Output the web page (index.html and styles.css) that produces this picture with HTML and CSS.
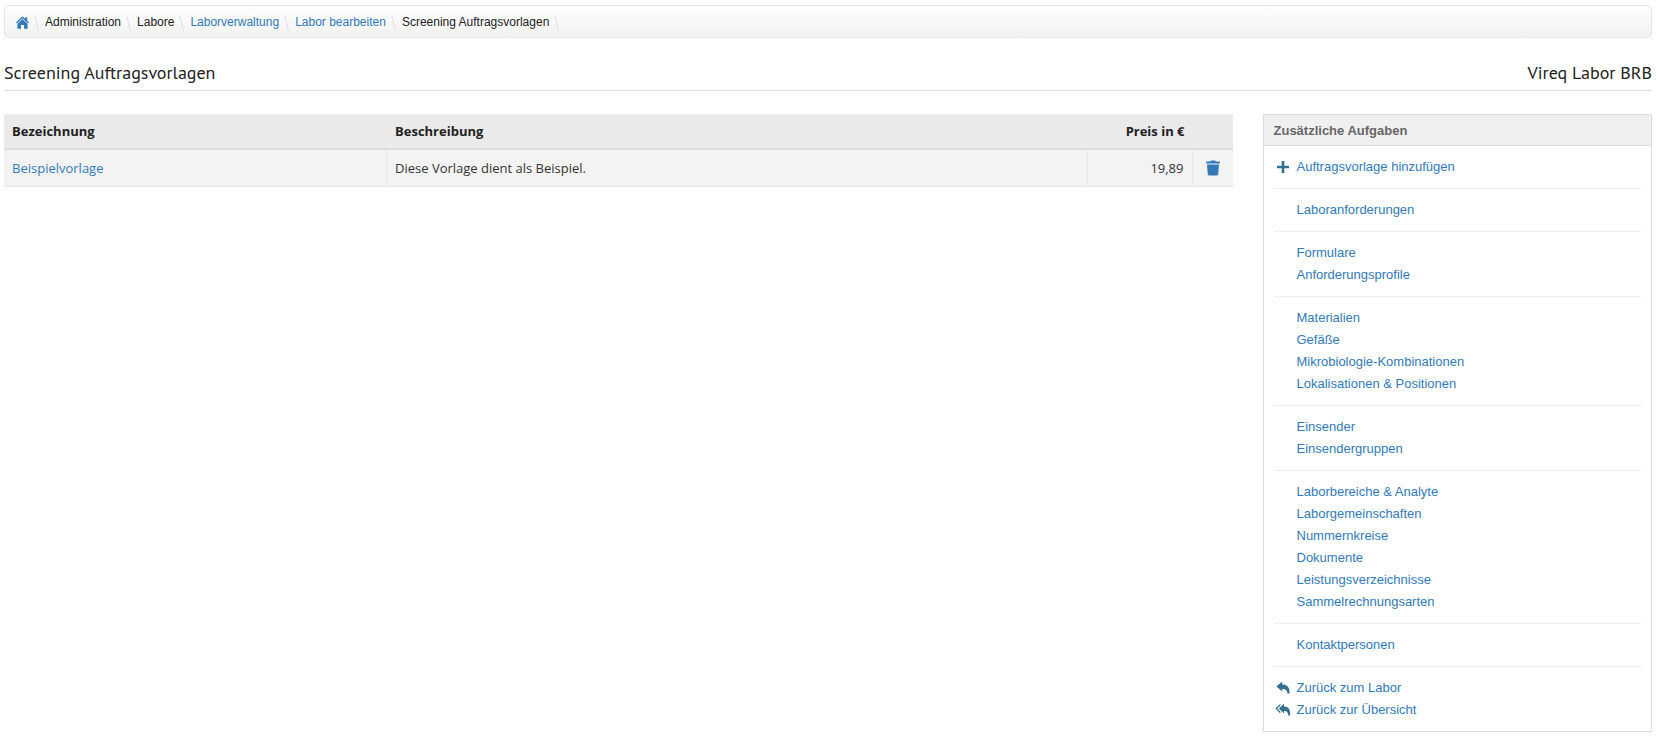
FILE: index.html
```html
<!DOCTYPE html>
<html lang="de">
<head>
  <meta charset="UTF-8">
  <meta name="viewport" content="width=device-width, initial-scale=1.0">
  <title>Screening Auftragsvorlagen</title>
  <link rel="stylesheet" href="styles.css">
</head>
<body>
  <nav class="breadcrumb" aria-label="Breadcrumb">
    <ul>
      <li>
        <a href="#" aria-label="Startseite">
          <svg class="icon-home" viewBox="0 0 13 13" width="13" height="13">
            <path d="M6.5 0.2 L9.2 2.8 V1.2 H11.2 V4.7 L13 6.5 L12 7.4 L6.5 2.2 L1 7.4 L0 6.5 Z"/>
            <path d="M6.5 3.1 L11.6 8 V12.8 H8 V9 H5 V12.8 H1.4 V8 Z"/>
          </svg>
        </a>
      </li>
      <li>Administration</li>
      <li>Labore</li>
      <li><a href="#">Laborverwaltung</a></li>
      <li><a href="#">Labor bearbeiten</a></li>
      <li>Screening Auftragsvorlagen</li>
    </ul>
  </nav>

  <header class="page-header">
    <h1>Screening Auftragsvorlagen</h1>
    <span class="lab-name">Vireq Labor BRB</span>
  </header>

  <div class="row">
    <main class="content">
      <table class="templates">
        <thead>
          <tr>
            <th class="col-name">Bezeichnung</th>
            <th class="col-description">Beschreibung</th>
            <th class="col-price">Preis in €</th>
            <th class="col-action"></th>
          </tr>
        </thead>
        <tbody>
          <tr>
            <td><a href="#">Beispielvorlage</a></td>
            <td>Diese Vorlage dient als Beispiel.</td>
            <td class="col-price">19,89</td>
            <td class="col-action">
              <button type="button" class="delete" aria-label="Löschen">
                <svg viewBox="0 0 14 16" width="14" height="16">
                  <path d="M0.2 3.4 V2 Q0.2 1.4 1 1.4 H4.2 Q4.6 0.4 5.4 0.4 H8.6 Q9.4 0.4 9.8 1.4 H13 Q13.8 1.4 13.8 2 V3.4 Z"/>
                  <path d="M1 4.4 H13 L12.2 14.2 Q12 15.6 10.6 15.6 H3.4 Q2 15.6 1.8 14.2 Z"/>
                </svg>
              </button>
            </td>
          </tr>
        </tbody>
      </table>
    </main>

    <aside class="sidebar">
      <section class="panel">
        <h2>Zusätzliche Aufgaben</h2>
        <ul>
          <li>
            <svg class="icon" viewBox="0 0 16 16" width="16" height="16"><path d="M6.7 2 H9.3 V6.7 H14 V9.3 H9.3 V14 H6.7 V9.3 H2 V6.7 H6.7 Z"/></svg>
            <a href="#">Auftragsvorlage hinzufügen</a>
          </li>
        </ul>
        <ul>
          <li><a href="#">Laboranforderungen</a></li>
        </ul>
        <ul>
          <li><a href="#">Formulare</a></li>
          <li><a href="#">Anforderungsprofile</a></li>
        </ul>
        <ul>
          <li><a href="#">Materialien</a></li>
          <li><a href="#">Gefäße</a></li>
          <li><a href="#">Mikrobiologie-Kombinationen</a></li>
          <li><a href="#">Lokalisationen &amp; Positionen</a></li>
        </ul>
        <ul>
          <li><a href="#">Einsender</a></li>
          <li><a href="#">Einsendergruppen</a></li>
        </ul>
        <ul>
          <li><a href="#">Laborbereiche &amp; Analyte</a></li>
          <li><a href="#">Laborgemeinschaften</a></li>
          <li><a href="#">Nummernkreise</a></li>
          <li><a href="#">Dokumente</a></li>
          <li><a href="#">Leistungsverzeichnisse</a></li>
          <li><a href="#">Sammelrechnungsarten</a></li>
        </ul>
        <ul>
          <li><a href="#">Kontaktpersonen</a></li>
        </ul>
        <ul>
          <li>
            <svg class="icon" viewBox="0 0 16 16" width="16" height="16"><path d="M1.4 6.6 L7.2 1.6 V4.4 C12 4.4 14.8 7 14.6 13.4 H12.4 C12.2 10 10.4 9 7.2 9 V11.6 Z"/></svg>
            <a href="#">Zurück zum Labor</a>
          </li>
          <li>
            <svg class="icon" viewBox="0 0 16 16" width="16" height="16">
              <path d="M3.9 6.6 L9 1.8 V4.4 C13.6 4.6 15.4 7.4 15.2 13.4 H13.2 C13 10 11.8 9 9 9 V11.4 Z"/>
              <path d="M0.4 6.6 L5.4 1.8 V3.6 L2.3 6.6 L5.4 9.6 V11.4 Z"/>
            </svg>
            <a href="#">Zurück zur Übersicht</a>
          </li>
        </ul>
      </section>
    </aside>
  </div>
</body>
</html>
```
FILE: styles.css
```css
* {
  box-sizing: border-box;
}

body {
  margin: 5px 5px 16px 4px;
  font-family: "Liberation Sans", Arial, sans-serif;
  font-size: 13px;
  line-height: 22px;
  color: #222;
  background: #fff;
}

ul {
  list-style: none;
  margin: 0;
  padding: 0;
}

a {
  color: #337ab7;
  text-decoration: none;
}

a:hover {
  text-decoration: underline;
}

svg {
  display: block;
  fill: currentColor;
}

/* Breadcrumb */
.breadcrumb {
  padding: 2px 11px 0;
  font-size: 12px;
  line-height: 29px;
  border: 1px solid #e5e5e5;
  border-radius: 4px;
  background: linear-gradient(#fff, #f2f2f2);
}

.breadcrumb ul,
.breadcrumb li {
  display: flex;
  align-items: center;
}

.breadcrumb li::after {
  content: "";
  width: 1px;
  height: 16px;
  margin: 0 8px 0 7px;
  background: #ddd;
  transform: skewX(14deg);
}

/* Page title */
.page-header {
  display: flex;
  justify-content: space-between;
  margin-bottom: 23px;
  padding: 22px 0 5px;
  font-family: "PT Sans", "Open Sans", sans-serif;
  font-size: 18px;
  line-height: 25px;
  border-bottom: 1px solid #ddd;
}

.page-header h1 {
  margin: 0;
  font-size: 18px;
  font-weight: normal;
}

/* Columns */
.row {
  display: flex;
  align-items: flex-start;
  margin: 0 -15px;
}

.content {
  width: 75%;
  padding: 0 15px;
}

.sidebar {
  width: 25%;
  padding: 0 15px;
}

/* Table */
.templates {
  width: 100%;
  table-layout: fixed;
  border-collapse: separate;
  border-spacing: 0;
  font-family: "Open Sans", sans-serif;
}

.templates th {
  padding: 6px 8px;
  text-align: left;
  background: #eaeaea;
  border-bottom: 2px solid #ddd;
}

.templates th:first-child {
  border-top-left-radius: 3px;
}

.templates td {
  padding: 7px 8px;
  color: #333;
  background: #f3f3f3;
  border-right: 1px solid #e6e6e6;
  border-bottom: 1px solid #e6e6e6;
}

.templates td:last-child {
  border-right: none;
}

.templates .col-name {
  width: 383px;
}

.templates .col-price {
  width: 105px;
  text-align: right;
}

.templates .col-action {
  width: 40px;
}

.delete {
  display: block;
  margin: 0 auto;
  padding: 0;
  border: none;
  background: none;
  color: #337ab7;
  cursor: pointer;
}

/* Side panel */
.panel {
  border: 1px solid #ddd;
  box-shadow: 0 1px 2px rgba(0, 0, 0, 0.08);
}

.panel h2 {
  margin: 0;
  padding: 5px 10px 3px;
  font-size: 13px;
  color: #666;
  background: #f0f0f0;
  border-bottom: 1px solid #ddd;
}

.panel ul {
  margin: 0 10px;
  padding: 10px 0;
}

.panel ul + ul {
  border-top: 1px solid #eee;
}

.panel li {
  display: flex;
  align-items: center;
  padding-left: 23px;
}

.panel .icon {
  margin: 0 6px 0 -22px;
  color: #31708f;
}
```
